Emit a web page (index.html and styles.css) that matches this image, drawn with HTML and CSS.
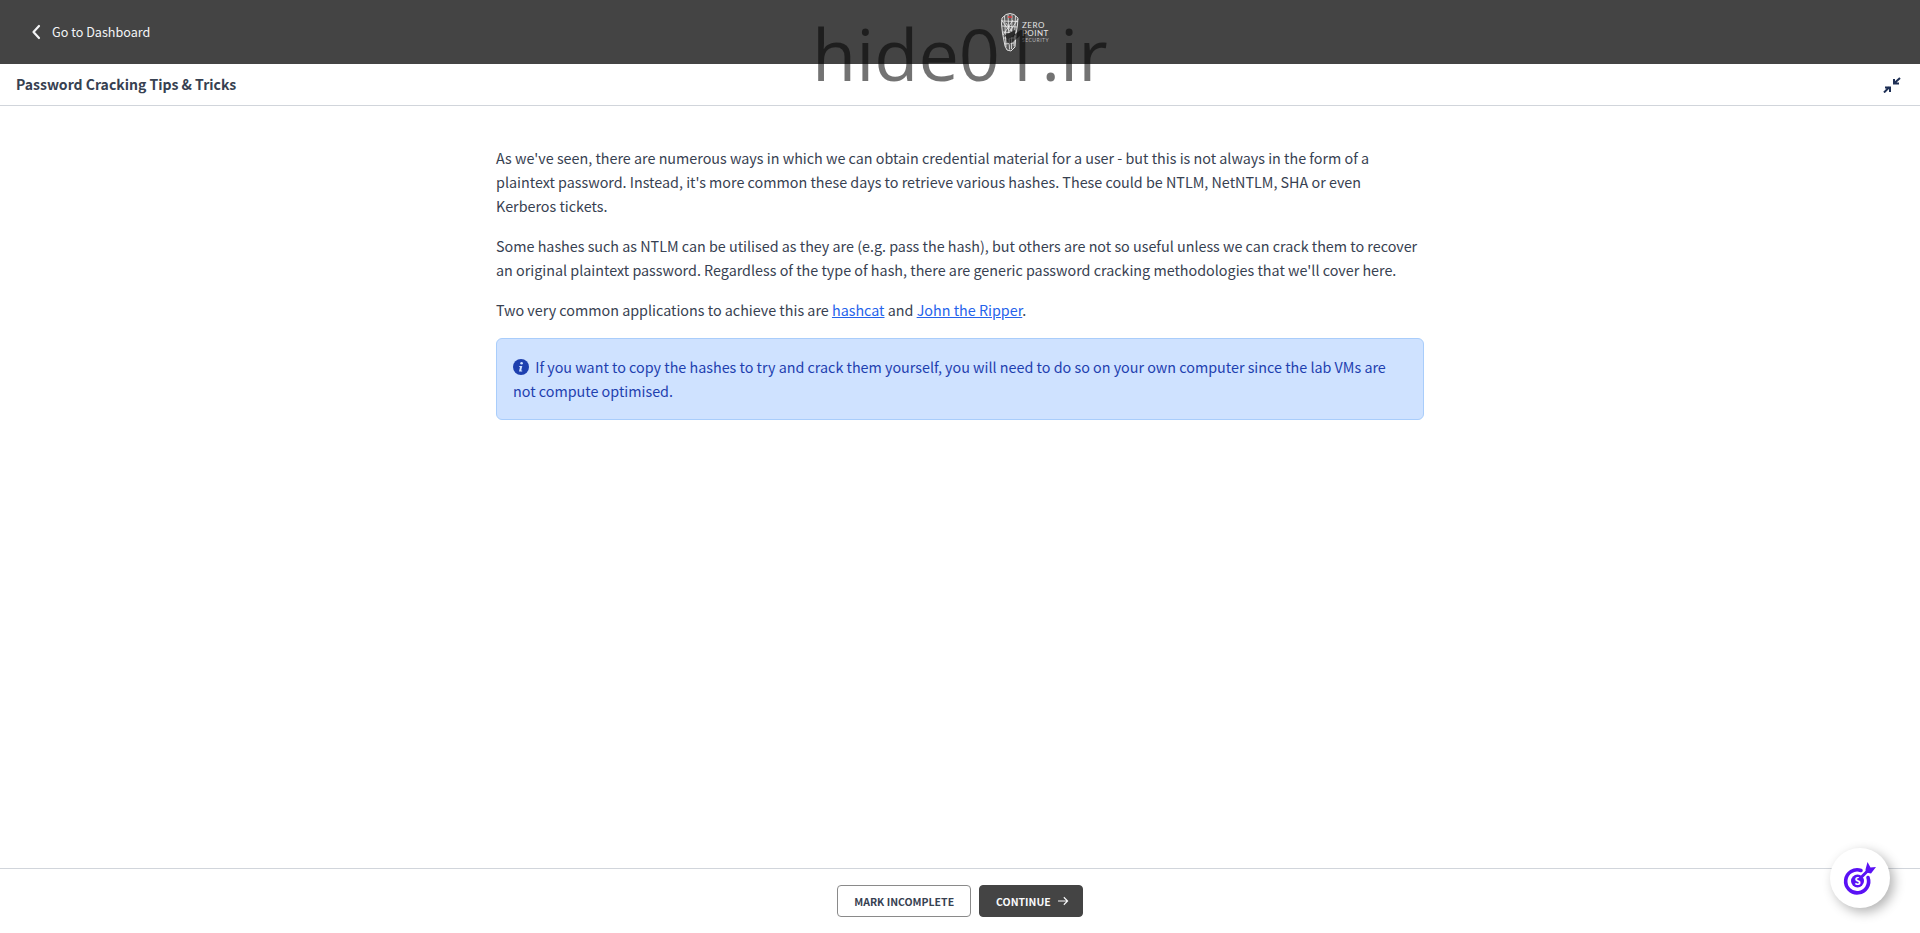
FILE: index.html
```html
<!DOCTYPE html>
<html lang="en">
<head>
    <meta charset="UTF-8">
    <meta name="viewport" content="width=device-width, initial-scale=1.0">
    <title>Password Cracking Tips &amp; Tricks</title>
    <link rel="stylesheet" href="styles.css">
</head>
<body>
    <header class="topbar">
        <a class="back-link" href="#">
            <svg class="back-icon" viewBox="0 0 10 16" width="10" height="16"><path d="M8 2 2.500 8 8 14" fill="none" stroke="currentColor" stroke-width="2.200" stroke-linecap="round" stroke-linejoin="round"/></svg>
            <span>Go to Dashboard</span>
        </a>
        <div class="logo">
            <svg class="logo-mark" viewBox="0 0 20 39" width="20" height="39">
                <path d="M2 5 6 1.500 10 .5l4 1 4 3.500-.5 7-1.500 9-1 13-4 4-4-1-2-4L2.500 20 1.500 11z" fill="#5a5a5a" stroke="#eee" stroke-width=".9"/>
                <path d="M4.500 3 6 34M8 1.500l1.500 35M12 1.500 11.500 36M15.500 3 14 33M2 8l16 .5M2 13l15 1M3 19l13 1M4 25l11 0M5 31l9-1M1.500 7l8 11M18 6 9 20M3 22l10-15M16 24 6 10" fill="none" stroke="#eee" stroke-width=".8"/>
                <path d="M5 22l10-5v5l-8 5z" fill="#2c2c2c"/>
                <path d="M8 4h4" stroke="#e33" stroke-width="1.300"/>
            </svg>
            <div class="logo-text">
                <span>ZERO</span>
                <span>POINT</span>
                <span class="logo-small">SECURITY</span>
            </div>
        </div>
    </header>

    <div class="titlebar">
        <h1>Password Cracking Tips &amp; Tricks</h1>
        <svg class="collapse-icon" viewBox="0 0 18 16" width="18" height="16">
            <path d="M17 1 11.500 6M11 2v4.500h5M1 15.500l5.500-5.500M7 15v-4.500H2" fill="none" stroke="#1e2f55" stroke-width="2"/>
        </svg>
    </div>

    <main class="content">
        <p>As we've seen, there are numerous ways in which we can obtain credential material for a user - but this is not always in the form of a plaintext password. Instead, it's more common these days to retrieve various hashes. These could be NTLM, NetNTLM, SHA or even Kerberos tickets.</p>
        <p>Some hashes such as NTLM can be utilised as they are (e.g. pass the hash), but others are not so useful unless we can crack them to recover an original plaintext password. Regardless of the type of hash, there are generic password cracking methodologies that we'll cover here.</p>
        <p>Two very common applications to achieve this are <a href="#">hashcat</a> and <a href="#">John the Ripper</a>.</p>
        <div class="alert">
            <svg class="alert-icon" viewBox="0 0 16 16" width="16" height="16">
                <circle cx="8" cy="8" r="8" fill="#1e40af"/>
                <circle cx="8.600" cy="4.200" r="1.300" fill="#cfe2ff"/>
                <path d="M6.300 7h3l-1.100 4.600h1v1H6l1-4.600H6.200z" fill="#cfe2ff"/>
            </svg>
            If you want to copy the hashes to try and crack them yourself, you will need to do so on your own computer since the lab VMs are not compute optimised.
        </div>
    </main>

    <footer class="footer">
        <button class="btn btn-outline">MARK INCOMPLETE</button>
        <button class="btn btn-dark">CONTINUE
            <svg viewBox="0 0 14 12" width="12" height="10"><path d="M1 6h11.500M8 1.500 12.500 6 8 10.500" fill="none" stroke="currentColor" stroke-width="1.400"/></svg>
        </button>
    </footer>

    <div class="watermark">hide01.ir</div>

    <div class="float-btn">
        <svg viewBox="0 0 36 36" width="36" height="36">
            <path d="M19 10.500a11.500 11.500 0 1 0 7 7" fill="none" stroke="#5a11f5" stroke-width="3.600" stroke-linecap="round"/>
            <circle cx="15.500" cy="21" r="6.500" fill="#5a11f5"/>
            <text x="15.500" y="24.500" class="float-letter" text-anchor="middle">S</text>
            <path d="M17 19.500 27 9.500" stroke="#5a11f5" stroke-width="3"/>
            <path d="M23.500 9.500 25.500 2l3 5.500L34 7l-5 6.500-5-1z" fill="#5a11f5"/>
        </svg>
    </div>
</body>
</html>
```

FILE: styles.css
```css
html, body {
    height: 100%;
}
body {
    font-family: "Noto Sans CJK SC", "Noto Sans", sans-serif;
    margin: 0;
    background: white;
    color: #374151;
    display: flex;
    flex-direction: column;
    overflow: hidden;
}
.topbar {
    position: relative;
    flex: 0 0 64px;
    background: #444444;
    display: flex;
    align-items: center;
    padding-left: 31px;
}
.back-link {
    display: flex;
    align-items: center;
    gap: 11px;
    color: #f3f4f6;
    text-decoration: none;
    font-size: 12.600px;
    margin-bottom: 1px;
}
.logo {
    position: absolute;
    left: 1000px;
    top: 13px;
    display: flex;
    gap: 2px;
    color: #e5e5e5;
}
.logo-text {
    display: flex;
    flex-direction: column;
    padding-top: 9px;
    font-family: Lato, sans-serif;
    font-size: 8px;
    line-height: 7.500px;
    letter-spacing: 0.5px;
}
.logo-small {
    font-size: 5px;
    line-height: 6px;
    letter-spacing: 0.5px;
    color: #bbbbbb;
}
.titlebar {
    flex: 0 0 41px;
    display: flex;
    align-items: center;
    justify-content: space-between;
    padding: 0 19px 0 16px;
    border-bottom: 1px solid #d1d5db;
}
h1 {
    margin: 0 0 2px;
    font-size: 14px;
    font-weight: 600;
    color: #374151;
}
.content {
    flex: 1;
    width: 928px;
    margin: 0 auto;
    padding-top: 40px;
    font-size: 14.340px;
    line-height: 24px;
}
.content p {
    margin: 0 0 16px;
}
.content a {
    color: #2563eb;
}
.alert {
    margin-top: 16px;
    padding: 16px;
    background: #cfe2ff;
    border: 1px solid #a9cdfb;
    border-radius: 6px;
    color: #1e40af;
}
.alert-icon {
    vertical-align: -2px;
    margin-right: 3px;
}
.footer {
    flex: 0 0 64px;
    border-top: 1px solid #d1d5db;
    display: flex;
    justify-content: center;
    align-items: center;
    gap: 8px;
}
.btn {
    height: 32px;
    padding: 0 16px;
    font-family: inherit;
    font-size: 10.500px;
    font-weight: 600;
    border-radius: 4px;
    display: flex;
    align-items: center;
    gap: 6px;
}
.btn-outline {
    background: white;
    color: #374151;
    border: 1px solid #8a8a8a;
}
.btn-dark {
    background: #444444;
    color: #f9fafb;
    border: 1px solid #444444;
    padding-right: 13px;
}
.watermark {
    position: absolute;
    left: 812px;
    top: 0;
    font-family: "Open Sans", sans-serif;
    font-size: 72px;
    line-height: 106px;
    color: rgba(0, 0, 0, 0.55);
    pointer-events: none;
}
.float-btn {
    position: absolute;
    left: 1830px;
    top: 848px;
    width: 60px;
    height: 60px;
    border-radius: 50%;
    background: white;
    box-shadow: 4px 4px 12px rgba(0, 0, 0, 0.3);
    display: flex;
    align-items: center;
    justify-content: center;
}
.float-letter {
    font-size: 10px;
    font-weight: 700;
    fill: white;
}
```
